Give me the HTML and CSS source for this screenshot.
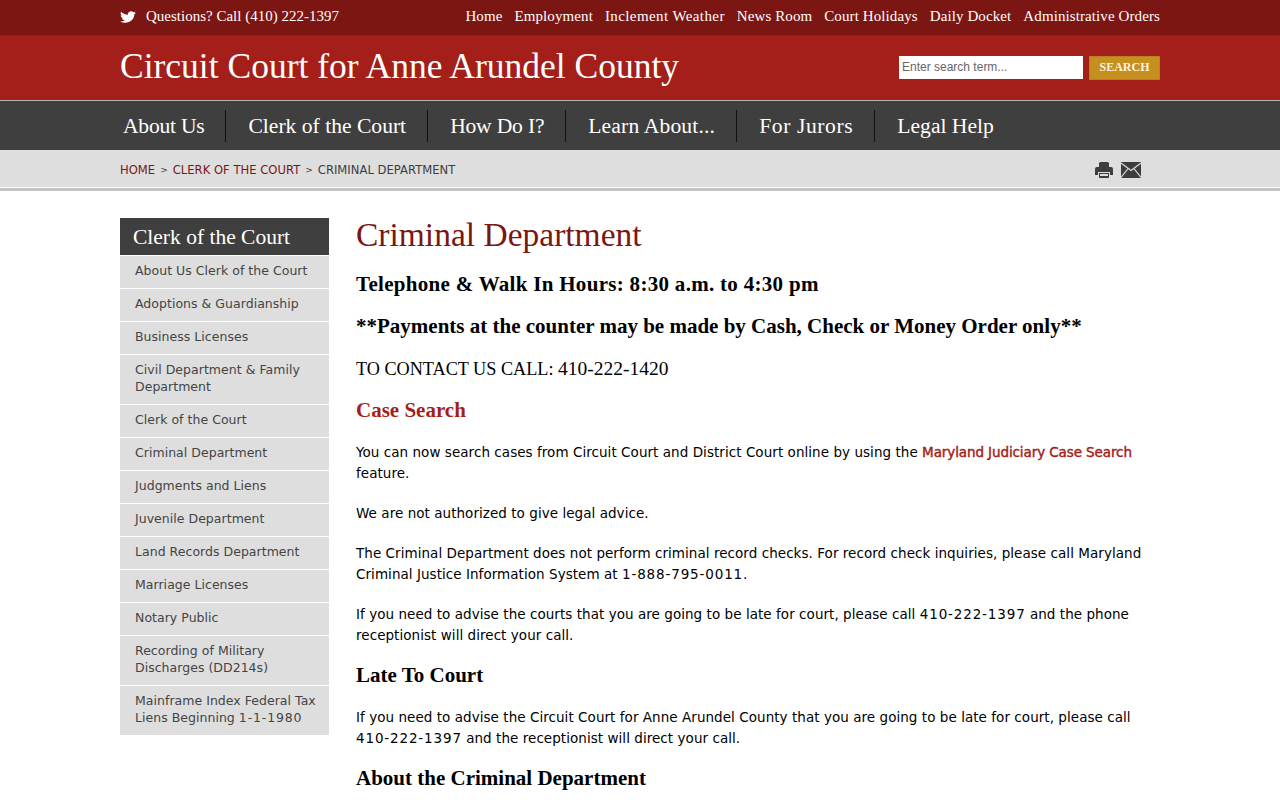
FILE: index.html
```html
<!DOCTYPE html>
<html lang="en">
<head>
<meta charset="utf-8">
<title>Criminal Department</title>
<link rel="stylesheet" href="styles.css">
</head>
<body>
<header>
  <div class="topbar">
    <div class="wrap topbar-in">
      <div class="phone">
        <svg class="tw" viewBox="0 0 24 24" width="16" height="14" preserveAspectRatio="none"><path fill="#fff" d="M23.95 4.57a10 10 0 0 1-2.82.77 4.96 4.96 0 0 0 2.16-2.72c-.95.55-2 .95-3.12 1.18a4.92 4.92 0 0 0-8.38 4.48C7.69 8.1 4.07 6.13 1.64 3.16a4.82 4.82 0 0 0-.67 2.48c0 1.71.87 3.21 2.19 4.1a4.9 4.9 0 0 1-2.23-.62v.06a4.92 4.92 0 0 0 3.95 4.83 5 5 0 0 1-2.21.08 4.94 4.94 0 0 0 4.6 3.42A9.87 9.87 0 0 1 0 19.54a14 14 0 0 0 7.56 2.21c9.05 0 14-7.5 14-13.98 0-.21 0-.42-.02-.63a9.94 9.94 0 0 0 2.41-2.57z"/></svg>
        <span>Questions? Call (410) 222-1397</span>
      </div>
      <nav class="toplinks">
        <a>Home</a><a>Employment</a><a>Inclement Weather</a><a>News Room</a><a>Court Holidays</a><a>Daily Docket</a><a>Administrative Orders</a>
      </nav>
    </div>
  </div>
  <div class="brand">
    <div class="wrap brand-in">
      <div class="site-title">Circuit Court for Anne Arundel County</div>
      <form class="search">
        <input class="search-input" type="text" placeholder="Enter search term...">
        <button class="search-btn" type="button">SEARCH</button>
      </form>
    </div>
  </div>
  <nav class="mainnav">
    <div class="wrap mainnav-in">
      <a>About Us</a><a>Clerk of the Court</a><a>How Do I?</a><a>Learn About...</a><a>For Jurors</a><a>Legal Help</a>
    </div>
  </nav>
  <div class="crumbs">
    <div class="wrap crumbs-in">
      <div class="trail"><a>HOME</a><span class="sep">&gt;</span><a>CLERK OF THE COURT</a><span class="sep">&gt;</span><span>CRIMINAL DEPARTMENT</span></div>
      <div class="tools">
        <svg viewBox="0 0 18 16" width="18" height="16"><path fill="#3d3d3d" d="M4 1.500A1.500 1.500 0 0 1 5.500 0h7A1.500 1.500 0 0 1 14 1.500V5H4zM2 5h14a2 2 0 0 1 2 2v6h-3v-3H3v3H0V7a2 2 0 0 1 2-2zM4 11h10v4a1 1 0 0 1-1 1H5a1 1 0 0 1-1-1z"/><path fill="#dedede" d="M5 12h8v2H5z"/></svg>
        <svg viewBox="0 0 20 16" width="20" height="16"><path fill="#3d3d3d" d="M0 0h20v16H0z"/><path fill="none" stroke="#dedede" stroke-width="1.200" d="M0 1l10 7.500 10-7.500M0 15.500l7.500-9.500M20 15.500l-7.500-9.500"/></svg>
      </div>
    </div>
  </div>
</header>
<div class="wrap page">
  <aside class="side">
    <h2 class="side-title">Clerk of the Court</h2>
    <ul class="side-list">
      <li>About Us Clerk of the Court</li>
      <li>Adoptions &amp; Guardianship</li>
      <li>Business Licenses</li>
      <li>Civil Department &amp; Family Department</li>
      <li>Clerk of the Court</li>
      <li>Criminal Department</li>
      <li>Judgments and Liens</li>
      <li>Juvenile Department</li>
      <li>Land Records Department</li>
      <li>Marriage Licenses</li>
      <li>Notary Public</li>
      <li>Recording of Military Discharges (DD214s)</li>
      <li>Mainframe Index Federal Tax<br>Liens Beginning <span class="tel">1-1-1980</span></li>
    </ul>
  </aside>
  <main class="content">
    <h1>Criminal Department</h1>
    <h3 class="hours">Telephone &amp; Walk In Hours: 8:30 a.m. to 4:30 pm</h3>
    <h3>**Payments at the counter may be made by Cash, Check or Money Order only**</h3>
    <h3 class="plain">TO CONTACT US CALL: <span class="digits">410-222-1420</span></h3>
    <h3 class="red">Case Search</h3>
    <p>You can now search cases from Circuit Court and District Court online by using the <a>Maryland Judiciary Case Search</a><br>feature.</p>
    <p>We are not authorized to give legal advice.</p>
    <p>The Criminal Department does not perform criminal record checks. For record check inquiries, please call Maryland<br>Criminal Justice Information System at <span class="tel">1-888-795-0011</span>.</p>
    <p>If you need to advise the courts that you are going to be late for court, please call <span class="tel">410-222-1397</span> and the phone<br>receptionist will direct your call.</p>
    <h3>Late To Court</h3>
    <p>If you need to advise the Circuit Court for Anne Arundel County that you are going to be late for court, please call<br><span class="tel">410-222-1397</span> and the receptionist will direct your call.</p>
    <h3>About the Criminal Department</h3>
  </main>
</div>
</body>
</html>
```
FILE: styles.css
```css
* { box-sizing: border-box; }
html, body { margin: 0; padding: 0; }
body { background: #fff; color: #000; font-family: "DejaVu Sans", sans-serif; height: 800px; overflow: hidden; }
.wrap { width: 1040px; margin: 0 auto; }
.topbar { background: #7b1613; height: 36px; border-bottom: 1px solid #8e1f1a; color: #fff; font-family: "Liberation Serif", serif; font-size: 15px; }
.topbar-in { display: flex; justify-content: space-between; align-items: center; height: 33px; }
.phone { display: flex; align-items: center; gap: 10px; }
.toplinks { display: flex; gap: 12px; letter-spacing: .1px; }
.toplinks a:nth-child(3) { letter-spacing: .4px; }
.brand { background: #a51f1a; height: 65px; border-bottom: 1px solid #b5b0b0; }
.brand-in { display: flex; justify-content: space-between; align-items: center; height: 61px; }
.site-title { color: #fff; font-family: "Liberation Serif", serif; font-size: 35.500px; margin-bottom: 2px; }
.search { display: flex; gap: 6px; margin-top: 2px; }
.search-input { width: 184px; height: 23px; border: 0; padding: 0 3px; font: 12px "Liberation Sans", sans-serif; background: #fff; }
.search-input::placeholder { color: #666; }
.search-btn { width: 71px; height: 24px; background: #c5901f; border: 1px solid #b58420; color: #fbf3dc; font: bold 12px "Liberation Serif", serif; padding: 0; }
.mainnav { background: #3f3f3f; height: 49px; }
.mainnav-in { display: flex; align-items: center; height: 50px; color: #fff; font-family: "Liberation Serif", serif; font-size: 21.600px; }
.mainnav-in a { padding: 0 21px 0 22px; height: 32px; line-height: 32px; border-right: 1px solid #111; }
.mainnav-in a:first-child { padding-left: 3px; letter-spacing: -.25px; }
.mainnav-in a:nth-child(3) { letter-spacing: -.2px; }
.mainnav-in a:nth-child(4) { letter-spacing: .15px; }
.mainnav-in a:nth-child(5) { letter-spacing: .6px; }
.mainnav-in a:last-child { border-right: 0; }
.crumbs { background: #dedede; height: 37px; box-shadow: 0 1px 0 #fff, 0 4px 0 #c4c4c4; }
.crumbs-in { display: flex; justify-content: space-between; align-items: center; height: 38px; }
.trail { font-size: 11.600px; color: #3d3d3d; display: flex; align-items: center; gap: 5px; margin-top: 1px; }
.trail a { color: #7b1613; }
.trail .sep { font-size: 9px; }
.tools { display: flex; gap: 8px; margin-right: 19px; align-items: center; margin-top: 1px; }
.tools svg { display: block; }
.page { display: flex; gap: 27px; padding-top: 31px; align-items: flex-start; }
.side { width: 209px; flex: none; }
.side-title { margin: 0; height: 37px; padding-left: 13px; background: #3f3f3f; color: #fff; font: 400 21.500px/38px "Liberation Serif", serif; }
.side-list { list-style: none; margin: 0; padding: 0; border-top: 1px solid #fff; }
.side-list li { background: #dedede; border-bottom: 1px solid #fff; padding: 6px 8px 9px 15px; font-size: 12.500px; line-height: 17px; color: #444; letter-spacing: .03px; }
.side-list li:last-child { border-bottom: 0; }
.content { flex: 1; min-width: 0; }
h1 { margin: -2px 0 20px; color: #7b1613; font: 400 33.500px/38px "Liberation Serif", serif; }
h3 { margin: 0 0 21px; font: 700 21px/21px "Liberation Serif", serif; }
h3.hours { letter-spacing: .3px; }
h3.plain { font-weight: 400; font-size: 18.200px; margin-bottom: 20px; }
h3.plain .digits { font-size: 19.500px; }
h3.red { color: #a51f1a; }
p { margin: 0 0 19px; font-size: 13.500px; line-height: 21px; letter-spacing: .05px; }
p a { color: #a51f1a; letter-spacing: -.1px; -webkit-text-stroke: .45px #a51f1a; }
.tel { white-space: nowrap; letter-spacing: .85px; }
```
